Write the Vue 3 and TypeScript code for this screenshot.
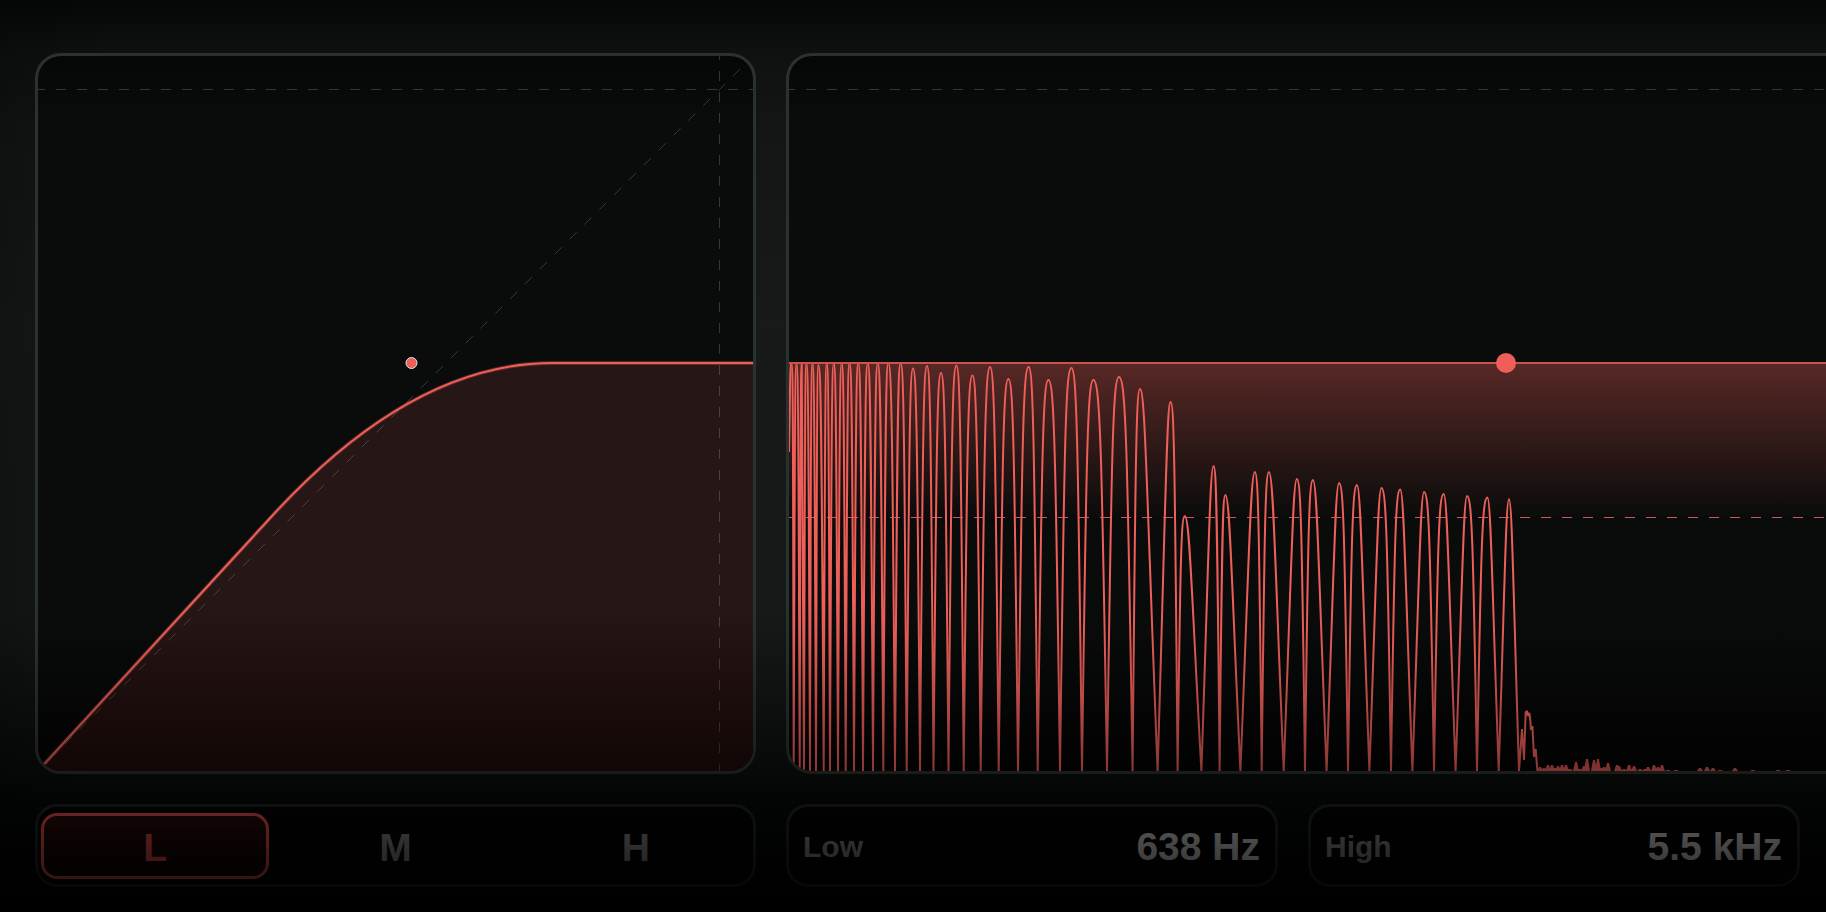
<script setup lang="ts">
import { ref } from 'vue'

type Band = 'L' | 'M' | 'H'
// start x, peak x, peak y, sides of the lobe that slope gently
type Lobe = [start: number, peak: number, top: number, soft?: 'l' | 'r' | 'lr']

const bands: Band[] = ['L', 'M', 'H']
const activeBand = ref<Band>('L')
const low = ref('638 Hz')
const high = ref('5.5 kHz')

const floor = 771

const lobes: Lobe[] = [
  [793.7, 796.5, 363], [799.7, 801.7, 363], [804, 806.4, 363], [810, 812.4, 363],
  [816, 818.4, 365], [823.7, 826.8, 363], [830, 833.8, 363], [838, 841.7, 363],
  [845.7, 849.5, 363], [854, 858.3, 363], [863, 867.7, 363], [873, 877.7, 363],
  [883.3, 888.3, 363], [895, 900.6, 363], [906.7, 913, 368.5], [920, 927, 366],
  [933.5, 941, 373], [948.5, 956.4, 365.5], [963.7, 972.4, 375.5], [980.7, 990, 367],
  [998.7, 1008.4, 379], [1018, 1028.6, 367], [1037.7, 1048.4, 380], [1060, 1071.4, 368],
  [1082, 1093.4, 380], [1107, 1119, 377], [1132.6, 1140, 389, 'r'], [1157.6, 1170.6, 402, 'l'],
  [1177.6, 1184.8, 516, 'r'], [1201.4, 1213.5, 466, 'l'], [1219.6, 1225.4, 495, 'r'],
  [1240.4, 1254.8, 472, 'l'], [1261.7, 1269, 472, 'r'], [1283.7, 1296.8, 479, 'l'],
  [1305, 1313, 480, 'r'], [1326.6, 1339, 483, 'l'], [1348, 1357, 485, 'r'],
  [1369.4, 1381.4, 488, 'l'], [1391, 1400.2, 489.5, 'r'], [1412.4, 1424, 492, 'l'],
  [1434, 1443.7, 494, 'r'], [1455.6, 1467, 496, 'l'], [1477, 1487.4, 497.5, 'r'],
  [1498.7, 1509, 499, 'lr'],
]
const lobesEnd = 1519

const decay: [number, number][] = [
  [1519, 771], [1522, 729], [1524, 760], [1525.7, 712], [1527, 711], [1528, 716], [1529.3, 713],
  [1530.3, 720], [1531, 730], [1532.4, 726], [1534, 757], [1535.7, 749], [1537.4, 771],
]

const noise: [number, number][] = [
  [1540, 4], [1544, 3], [1548, 6], [1552, 6], [1555, 3], [1558, 5], [1562, 6], [1566, 6], [1570, 2],
  [1576, 9], [1580, 2], [1584, 5], [1587, 12], [1594, 11], [1598, 12], [1601, 3], [1604, 4],
  [1608, 8], [1617, 6], [1619, 5], [1624, 2], [1629, 6], [1634, 5], [1640, 2], [1645, 2],
  [1648, 4], [1654, 6], [1658, 4], [1662, 6], [1668, 1], [1676, 1], [1700, 3], [1707, 4],
  [1713, 3], [1720, 1], [1735, 3], [1753, 1], [1778, 1], [1788, 1],
]

function side(peak: number, top: number, foot: number, gentle: boolean, rising: boolean): string {
  const [a, b, drop] = gentle ? [0.3, 0.4, 0.3] : [0.5, 0.62, 0.18]
  const w = foot - peak
  const h = floor - top
  const near = `${(peak + w * a).toFixed(1)} ${top}`
  const far = `${(peak + w * b).toFixed(1)} ${(top + h * drop).toFixed(1)}`
  return rising ? `C${far} ${near} ${peak} ${top}` : `C${near} ${far} ${foot} ${floor}`
}

function buildSpectrum(): string {
  let d = 'M789 452C790 400 790 363 791.4 363C793 363 793 420 793.7 771'
  lobes.forEach(([start, peak, top, soft = ''], i) => {
    const end = i + 1 < lobes.length ? lobes[i + 1][0] : lobesEnd
    d += side(peak, top, start, soft.includes('l'), true)
    d += side(peak, top, end, soft.includes('r'), false)
  })
  decay.forEach(([x, y]) => { d += `L${x} ${y}` })
  return d
}

function buildNoise(): string {
  return noise
    .map(([x, h]) => `M${x - 3} ${floor}L${x - 1} ${floor - h}H${x + 1}L${x + 3} ${floor}Z`)
    .join('')
}

const spectrum = buildSpectrum()
const noiseFloor = buildNoise()
const transfer = 'M36 773L272 516Q412 363 552 363H756'
</script>

<template>
  <main class="plugin">
    <section class="panel" aria-label="Transfer curve">
      <svg class="plot" viewBox="38 56 715 715" preserveAspectRatio="none">
        <defs>
          <linearGradient id="under" x1="0" y1="0" x2="0" y2="1">
            <stop offset="0" stop-color="#261615" />
            <stop offset=".62" stop-color="#261615" />
            <stop offset="1" stop-color="#1f0b0a" />
          </linearGradient>
        </defs>
        <path fill="url(#under)" :d="`${transfer}V773H36Z`" />
        <path class="guide" d="M35 89.5H756" />
        <path class="guide" d="M719.5 50V774" />
        <path class="guide" d="M35 774L745 64" />
        <path class="glow" :d="transfer" />
        <path class="transfer" :d="transfer" />
        <circle class="knee" cx="411.5" cy="363" r="5.5" />
      </svg>
    </section>

    <section class="panel open" aria-label="Spectrum">
      <svg class="plot" viewBox="789 56 1037 715" preserveAspectRatio="none">
        <defs>
          <linearGradient id="reduction" x1="0" y1="0" x2="0" y2="1">
            <stop offset="0" stop-color="#ee5f59" stop-opacity=".34" />
            <stop offset=".5" stop-color="#ee5f59" stop-opacity=".17" />
            <stop offset="1" stop-color="#ee5f59" stop-opacity="0" />
          </linearGradient>
        </defs>
        <rect x="789" y="363" width="1037" height="154" fill="url(#reduction)" />
        <path class="guide" d="M785 89.5H1826" />
        <path class="threshold" d="M785 517.5H1826" />
        <path class="spectrum" :d="spectrum" />
        <path class="noise" :d="noiseFloor" />
        <path class="ceiling" d="M789 363H1826" />
        <circle class="handle" cx="1506" cy="363" r="10" />
      </svg>
    </section>

    <div class="box bands" role="group" aria-label="Band">
      <button
        v-for="band in bands"
        :key="band"
        type="button"
        class="band"
        :class="{ active: band === activeBand }"
        :aria-pressed="band === activeBand"
        @click="activeBand = band"
      >{{ band }}</button>
    </div>

    <div class="fields">
      <div class="box field">
        <label for="low">Low</label>
        <input id="low" v-model="low" type="text">
      </div>
      <div class="box field">
        <label for="high">High</label>
        <input id="high" v-model="high" type="text">
      </div>
    </div>
  </main>
</template>

<style>
body {
  margin: 0;
  background: #000;
}
</style>

<style scoped>
.plugin {
  position: relative;
  box-sizing: border-box;
  display: grid;
  grid-template-columns: minmax(0, 721fr) minmax(0, 1040fr);
  gap: 30px;
  min-height: 100vh;
  align-content: start;
  padding: 53px 0 25px 35px;
  overflow: hidden;
  font-family: "Liberation Sans", Arial, sans-serif;
  font-weight: 700;
  background:
    linear-gradient(90deg, rgba(0, 0, 0, .25), transparent 120px),
    linear-gradient(180deg, #050706 0, #0e1110 52px, #131615 130px, #171a19 320px, #151918 620px, #111514 700px, #0b100f 770px, #060a09 804px, #000 890px);
}

.plugin::after {
  content: "";
  position: absolute;
  inset: auto 0 0;
  height: 312px;
  pointer-events: none;
  background: linear-gradient(180deg, transparent, rgba(0, 0, 0, .06) 40px, rgba(0, 0, 0, .42) 170px, rgba(0, 0, 0, .56) 213px, rgba(0, 0, 0, .77) 278px, rgba(0, 0, 0, .92));
}

.panel {
  box-sizing: border-box;
  overflow: hidden;
  border: 3px solid #2a3230;
  border-radius: 26px;
  background: linear-gradient(180deg, #050606, #0a0c0b 60px, #0a0c0b 560px, #030404);
}

.panel:first-child {
  aspect-ratio: 1;
}

.panel.open {
  border-right: 0;
  border-radius: 26px 0 0 26px;
}

.plot {
  display: block;
  width: 100%;
  height: 100%;
  fill: none;
}

.guide {
  stroke: rgba(225, 235, 230, .2);
  stroke-dasharray: 10 11;
}

.glow {
  stroke: rgba(238, 95, 89, .3);
  stroke-width: 4;
}

.transfer {
  stroke: #ee5f59;
  stroke-width: 2;
}

.knee {
  fill: #ee5f59;
  stroke: #dedfde;
}

.threshold {
  stroke: #cf5852;
  stroke-dasharray: 10 11;
}

.spectrum {
  stroke: #ee5f59;
  stroke-width: 2;
  stroke-linejoin: bevel;
}

.noise {
  fill: #d9534e;
}

.ceiling {
  stroke: #cf514c;
  stroke-width: 2;
}

.handle {
  fill: #ee5f59;
}

.box {
  box-sizing: border-box;
  height: 83px;
  border: 3px solid #202524;
  border-radius: 22px;
  background: #020303;
}

.bands {
  display: grid;
  grid-template-columns: repeat(3, 1fr);
  gap: 12px;
  padding: 6px 3px 5px;
}

.band {
  padding: 2px 0 0;
  border: 3px solid transparent;
  border-radius: 16px;
  background: none;
  color: #868988;
  font: inherit;
  font-size: 39px;
  line-height: 1;
}

.band.active {
  border-color: #ee4f4a;
  background: linear-gradient(180deg, #2c0b0b, #0c0202);
  color: #e24a46;
}

.fields {
  display: grid;
  grid-template-columns: repeat(2, minmax(0, 1fr));
  gap: 30px;
  padding-right: 26px;
}

.field {
  display: flex;
  align-items: center;
  gap: 16px;
  padding: 3px 15px 0 14px;
}

.field label {
  color: #868988;
  font-size: 30px;
  line-height: 40px;
}

.field input {
  flex: 1;
  min-width: 0;
  height: 44px;
  padding: 0;
  border: 0;
  outline: 0;
  background: none;
  color: #d0d1d0;
  font: inherit;
  font-size: 39px;
  text-align: right;
}
</style>
